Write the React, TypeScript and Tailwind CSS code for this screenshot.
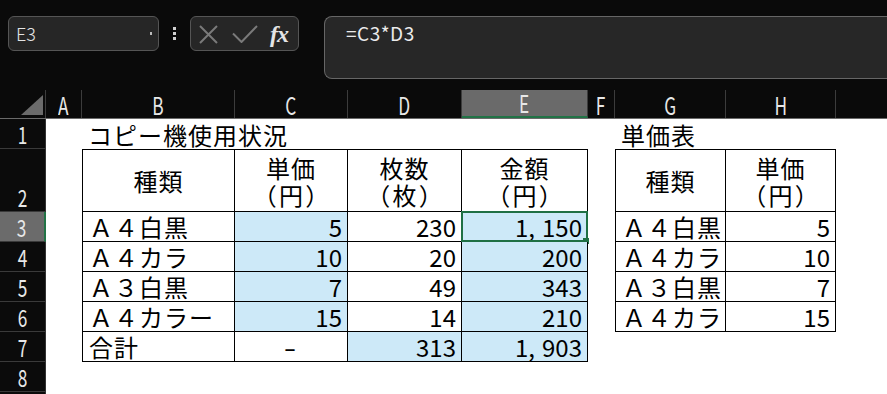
import type { ReactNode } from 'react';

const jp = "font-['Noto_Sans_CJK_JP','Noto_Sans',sans-serif]";

const cols = [
  { k: 'A', w: 'w-[36px]' },
  { k: 'B', w: 'w-[153px]' },
  { k: 'C', w: 'w-[113px]' },
  { k: 'D', w: 'w-[114px]' },
  { k: 'E', w: 'w-[126px]' },
  { k: 'F', w: 'w-[27px]' },
  { k: 'G', w: 'w-[111px]' },
  { k: 'H', w: 'w-[110px]' },
  { k: '', w: 'w-[60px]' },
];

type Cell = { v: ReactNode; a: 'l' | 'r' | 'c' };

const head = (top: string, bottom: string) => (
  <div className="flex flex-col items-center">
    <span className="leading-[27px]">{top}</span>
    <span className="leading-[27px] tracking-[3px] pl-[3px] [font-feature-settings:'palt']">{bottom}</span>
  </div>
);

const comma = (a: string, b: string) => (
  <>
    {a}
    <span className="pr-[7px]">,</span>
    {b}
  </>
);

// key: row-col (col index 0 = A)
const data: Record<string, Cell> = {
  '1-1': { v: 'コピー機使用状況', a: 'l' },
  '1-6': { v: '単価表', a: 'l' },
  '2-1': { v: '種類', a: 'c' },
  '2-2': { v: head('単価', '（円）'), a: 'c' },
  '2-3': { v: head('枚数', '（枚）'), a: 'c' },
  '2-4': { v: head('金額', '（円）'), a: 'c' },
  '2-6': { v: '種類', a: 'c' },
  '2-7': { v: head('単価', '（円）'), a: 'c' },
  '3-1': { v: 'Ａ４白黒', a: 'l' },
  '3-2': { v: '5', a: 'r' },
  '3-3': { v: '230', a: 'r' },
  '3-4': { v: comma('1', '150'), a: 'r' },
  '3-6': { v: 'Ａ４白黒', a: 'l' },
  '3-7': { v: '5', a: 'r' },
  '4-1': { v: 'Ａ４カラ', a: 'l' },
  '4-2': { v: '10', a: 'r' },
  '4-3': { v: '20', a: 'r' },
  '4-4': { v: '200', a: 'r' },
  '4-6': { v: 'Ａ４カラ', a: 'l' },
  '4-7': { v: '10', a: 'r' },
  '5-1': { v: 'Ａ３白黒', a: 'l' },
  '5-2': { v: '7', a: 'r' },
  '5-3': { v: '49', a: 'r' },
  '5-4': { v: '343', a: 'r' },
  '5-6': { v: 'Ａ３白黒', a: 'l' },
  '5-7': { v: '7', a: 'r' },
  '6-1': { v: 'Ａ４カラー', a: 'l' },
  '6-2': { v: '15', a: 'r' },
  '6-3': { v: '14', a: 'r' },
  '6-4': { v: '210', a: 'r' },
  '6-6': { v: 'Ａ４カラ', a: 'l' },
  '6-7': { v: '15', a: 'r' },
  '7-1': { v: '合計', a: 'l' },
  '7-2': { v: <span className="inline-block scale-x-150">-</span>, a: 'c' },
  '7-3': { v: '313', a: 'r' },
  '7-4': { v: comma('1', '903'), a: 'r' },
};

const blue = new Set(['3-2', '4-2', '5-2', '6-2', '3-4', '4-4', '5-4', '6-4', '7-4', '7-3']);

const rows = [1, 2, 3, 4, 5, 6, 7, 8, 9];

function borders(r: number, c: number) {
  const t1 = c >= 1 && c <= 4 && r >= 2 && r <= 7;
  const t2 = c >= 6 && c <= 7 && r >= 2 && r <= 6;
  if (!t1 && !t2) return '';
  let s = 'border-r border-b border-black';
  if (c === 1 || c === 6) s += ' border-l';
  if (r === 2) s += ' border-t';
  return s;
}

const alignCls = { l: 'justify-start pl-[6px]', r: 'justify-end pr-[5px]', c: 'justify-center' };

export default function App() {
  return (
    <div className="w-[887px] h-[394px] overflow-hidden bg-[#0a0a0a] flex flex-col">
      {/* formula bar */}
      <div className="h-[90px] shrink-0 flex items-start pt-[16px] pl-[8px]">
        <div className="w-[151px] h-[35px] rounded-[6px] border border-[#555] bg-[#262626] flex items-center pl-[7px] pr-[6px]">
          <span className={`${jp} text-[18px] font-light text-[#e4e4e4] grow`}>E3</span>
          <span className="w-[2px] h-[3px] bg-[#bbb]" />
        </div>
        <div className="w-[31px] h-[35px] flex flex-col items-center justify-center gap-[2px]">
          <span className="w-[3px] h-[3px] bg-[#d0d0d0]" />
          <span className="w-[3px] h-[3px] bg-[#d0d0d0]" />
          <span className="w-[3px] h-[3px] bg-[#d0d0d0]" />
        </div>
        <div className="w-[109px] h-[35px] rounded-[6px] border border-[#555] bg-[#262626] flex items-center pl-[8px]">
          <svg width="19" height="19" viewBox="0 0 19 19" className="mt-[1px]">
            <path d="M1 1 L18 18 M18 1 L1 18" stroke="#7a7a7a" strokeWidth="2" fill="none" />
          </svg>
          <svg width="26" height="18" viewBox="0 0 26 18" className="ml-[14px]">
            <path d="M1 8.5 L9.5 17 L25 1" stroke="#7a7a7a" strokeWidth="2" fill="none" />
          </svg>
          <span className="ml-[12px] font-['Liberation_Serif',serif] italic font-bold text-[24px] leading-none text-[#e4e4e4] tracking-[-1px]">
            fx
          </span>
        </div>
        <div className="ml-[25px] grow h-[63px] rounded-l-[8px] border border-r-0 border-[#666] bg-[#272727] pl-[21px] pt-[4px]">
          <span className={`${jp} text-[19px] leading-[24px] tracking-[0.5px] text-[#ececec]`}>=C3*D3</span>
        </div>
      </div>

      {/* column headers */}
      <div className={`${jp} h-[29px] shrink-0 flex border-b border-[#6a6a6a] text-[#e8e8e8]`}>
        <div className="w-[46px] shrink-0 border-r border-[#3c3c3c] relative">
          <svg width="46" height="28" viewBox="0 0 46 28" className="absolute inset-0">
            <path d="M43 5 L43 25 L21 25 Z" fill="#6b6b6b" />
          </svg>
        </div>
        {cols.map((c) => (
          <div
            key={c.k || 'I'}
            className={`${c.w} shrink-0 flex items-end justify-center pb-[1px] border-r border-[#3c3c3c] ${
              c.k === 'E' ? 'bg-[#6a6a6a] border-b-2 border-b-[#217346]' : ''
            }`}
          >
            <span className="inline-block text-[24px] leading-none scale-x-[0.72]">{c.k}</span>
          </div>
        ))}
      </div>

      {/* sheet */}
      <div className="flex flex-col bg-white">
        {rows.map((r) => (
          <div key={r} className={`flex shrink-0 ${r === 2 ? 'h-[63px]' : 'h-[30px]'}`}>
            <div
              className={`${jp} w-[46px] shrink-0 flex items-end justify-center pb-[2px] border-b border-[#3a3a3a] text-[#e8e8e8] ${
                r === 3 ? 'bg-[#6b6b6b] border-r-2 border-r-[#217346]' : 'bg-[#0b0b0b] border-r border-r-[#333]'
              }`}
            >
              <span className="inline-block text-[24px] leading-none scale-x-[0.72]">{r}</span>
            </div>
            {cols.map((c, ci) => {
              const key = `${r}-${ci}`;
              const cell = data[key];
              const isNum = cell?.a === 'r';
              return (
                <div
                  key={key}
                  className={`${c.w} shrink-0 relative flex text-black ${jp} ${borders(r, ci)} ${
                    blue.has(key) ? 'bg-[#cde9f8]' : ''
                  } ${cell ? alignCls[cell.a] : ''} ${r === 1 ? 'items-end' : 'items-center'}`}
                >
                  {cell && (
                    <span
                      className={`whitespace-nowrap text-[24px] ${r === 1 ? 'leading-[28px]' : 'leading-[30px]'} ${
                        isNum ? '' : 'tracking-[1px]'
                      }`}
                    >
                      {cell.v}
                    </span>
                  )}
                  {key === '3-4' && (
                    <>
                      <div className="absolute -inset-px border-2 border-[#1f7044]" />
                      <div className="absolute -right-[2px] -bottom-[3px] w-[6px] h-[6px] bg-[#1f7044]" />
                    </>
                  )}
                </div>
              );
            })}
          </div>
        ))}
      </div>
    </div>
  );
}
